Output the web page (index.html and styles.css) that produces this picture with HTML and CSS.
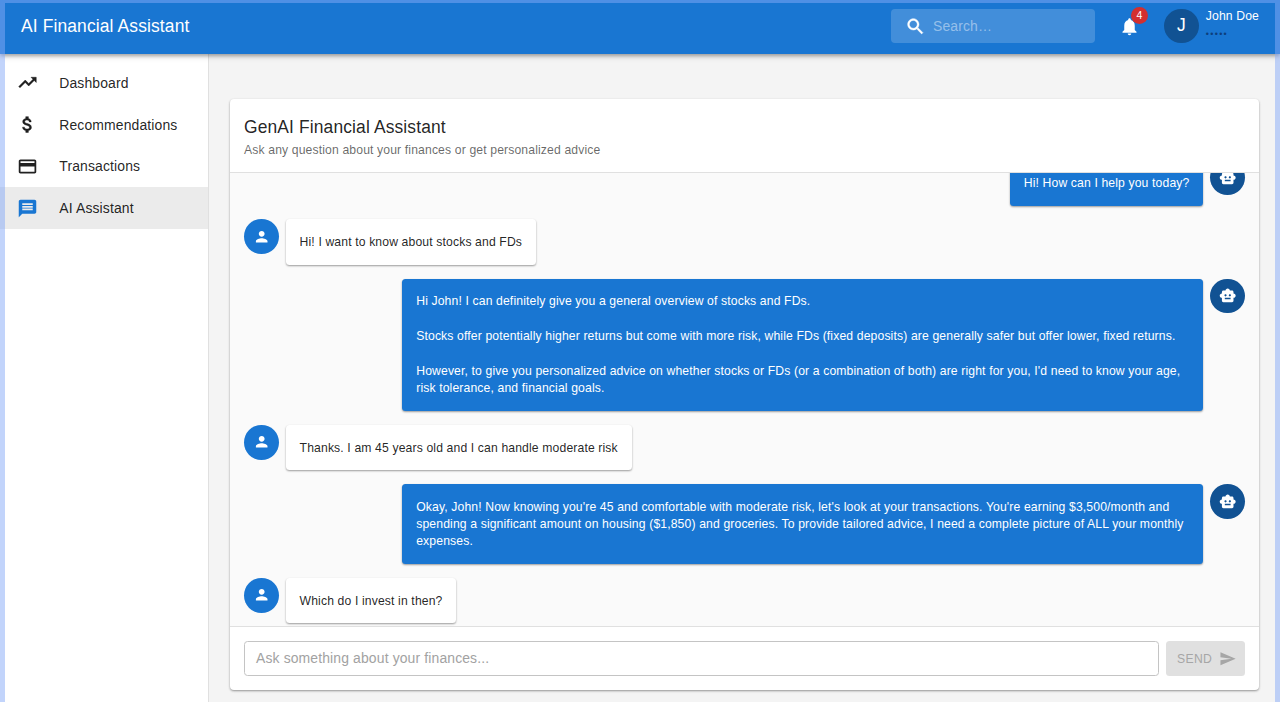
FILE: index.html
```html
<!DOCTYPE html>
<html lang="en">
<head>
<meta charset="utf-8">
<title>AI Financial Assistant</title>
<link rel="stylesheet" href="styles.css">
</head>
<body>
<svg class="defs" width="0" height="0">
  <symbol id="person" viewBox="0 0 24 24"><path d="M12 12c2.21 0 4-1.79 4-4s-1.79-4-4-4-4 1.79-4 4 1.79 4 4 4m0 2c-2.67 0-8 1.34-8 4v2h16v-2c0-2.66-5.33-4-8-4"/></symbol>
  <symbol id="bot" viewBox="0 0 24 24"><path d="M20 9V7c0-1.1-.9-2-2-2h-3c0-1.66-1.34-3-3-3S9 3.34 9 5H6c-1.1 0-2 .9-2 2v2c-1.66 0-3 1.34-3 3s1.34 3 3 3v4c0 1.1.9 2 2 2h12c1.1 0 2-.9 2-2v-4c1.66 0 3-1.34 3-3s-1.34-3-3-3M7.500 11.500c0-.83.67-1.500 1.500-1.500s1.500.67 1.500 1.500S9.830 13 9 13s-1.500-.67-1.500-1.500M16 17H8v-2h8zm-1-4c-.83 0-1.500-.67-1.500-1.500S14.170 10 15 10s1.500.67 1.500 1.500S15.830 13 15 13"/></symbol>
</svg>
<header class="appbar">
  <h1 class="brand">AI Financial Assistant</h1>
  <div class="search">
    <svg class="icon" viewBox="0 0 24 24"><path d="M15.500 14h-.79l-.28-.27C15.410 12.590 16 11.110 16 9.500 16 5.910 13.090 3 9.500 3S3 5.910 3 9.500 5.910 16 9.500 16c1.610 0 3.090-.59 4.230-1.570l.27.28v.79l5 4.990L20.490 19zm-6 0C7.010 14 5 11.990 5 9.500S7.010 5 9.500 5 14 7.010 14 9.500 11.990 14 9.500 14"/></svg>
    <span>Search…</span>
  </div>
  <div class="bell">
    <svg class="icon" viewBox="0 0 24 24"><path d="M12 22c1.100 0 2-.9 2-2h-4c0 1.100.89 2 2 2m6-6v-5c0-3.070-1.640-5.640-4.500-6.320V4c0-.83-.67-1.500-1.500-1.500s-1.500.67-1.500 1.500v.68C7.630 5.360 6 7.920 6 11v5l-2 2v1h16v-1z"/></svg>
    <span class="badge">4</span>
  </div>
  <div class="avatar dark initial">J</div>
  <div class="user"><span>John Doe</span><span class="dots">•••••</span></div>
</header>
<div class="shell">
  <nav class="sidebar">
    <a class="item"><svg class="icon bold" viewBox="0 0 24 24"><path d="m16 6 2.290 2.290-4.880 4.880-4-4L2 16.590 3.410 18l6-6 4 4 6.300-6.290L22 12V6z"/></svg>Dashboard</a>
    <a class="item"><svg class="icon bold" viewBox="0 0 24 24"><path d="M11.800 10.900c-2.270-.59-3-1.200-3-2.150 0-1.090 1.010-1.850 2.700-1.850 1.780 0 2.440.85 2.500 2.100h2.210c-.07-1.720-1.120-3.300-3.210-3.810V3h-3v2.160c-1.940.42-3.500 1.680-3.500 3.610 0 2.310 1.910 3.460 4.700 4.130 2.500.6 3 1.480 3 2.410 0 .69-.49 1.790-2.700 1.790-2.060 0-2.870-.92-2.980-2.100h-2.200c.12 2.190 1.760 3.420 3.680 3.830V21h3v-2.150c1.950-.37 3.500-1.500 3.500-3.550 0-2.840-2.430-3.810-4.700-4.400"/></svg>Recommendations</a>
    <a class="item"><svg class="icon" viewBox="0 0 24 24"><path d="M20 4H4c-1.110 0-1.990.89-1.990 2L2 18c0 1.110.89 2 2 2h16c1.110 0 2-.89 2-2V6c0-1.110-.89-2-2-2m0 14H4v-6h16zm0-10H4V6h16z"/></svg>Transactions</a>
    <a class="item selected"><svg class="icon" viewBox="0 0 24 24"><path d="M20 2H4c-1.100 0-1.990.9-1.990 2L2 22l4-4h14c1.100 0 2-.9 2-2V4c0-1.100-.9-2-2-2m-2 12H6v-2h12zm0-3H6V9h12zm0-3H6V6h12z"/></svg>AI Assistant</a>
  </nav>
  <main class="content">
    <section class="card">
      <div class="card-head">
        <h2>GenAI Financial Assistant</h2>
        <p>Ask any question about your finances or get personalized advice</p>
      </div>
      <div class="messages">
        <div class="row reply"><div class="bubble">Hi! How can I help you today?</div><div class="avatar dark"><svg><use href="#bot"/></svg></div></div>
        <div class="row"><div class="avatar"><svg><use href="#person"/></svg></div><div class="bubble">Hi! I want to know about stocks and FDs</div></div>
        <div class="row reply"><div class="bubble">Hi John! I can definitely give you a general overview of stocks and FDs.<br><br>Stocks offer potentially higher returns but come with more risk, while FDs (fixed deposits) are generally safer but offer lower, fixed returns.<br><br>However, to give you personalized advice on whether stocks or FDs (or a combination of both) are right for you, I'd need to know your age,<br>risk tolerance, and financial goals.</div><div class="avatar dark"><svg><use href="#bot"/></svg></div></div>
        <div class="row"><div class="avatar"><svg><use href="#person"/></svg></div><div class="bubble">Thanks. I am 45 years old and I can handle moderate risk</div></div>
        <div class="row reply"><div class="bubble">Okay, John! Now knowing you're 45 and comfortable with moderate risk, let's look at your transactions. You're earning $3,500/month and<br>spending a significant amount on housing ($1,850) and groceries. To provide tailored advice, I need a complete picture of ALL your monthly<br>expenses.</div><div class="avatar dark"><svg><use href="#bot"/></svg></div></div>
        <div class="row"><div class="avatar"><svg><use href="#person"/></svg></div><div class="bubble">Which do I invest in then?</div></div>
      </div>
      <div class="composer">
        <div class="field">Ask something about your finances...</div>
        <div class="send">SEND<svg viewBox="0 0 24 24"><path d="M2.010 21 23 12 2.010 3 2 10l15 2-15 2z"/></svg></div>
      </div>
    </section>
  </main>
</div>
<div class="glow"></div>
</body>
</html>
```
FILE: styles.css
```css
* { box-sizing: border-box; }
body {
  margin: 0;
  height: 702px;
  overflow: hidden;
  display: flex;
  flex-direction: column;
  font-family: "Liberation Sans", Arial, sans-serif;
  color: rgba(0, 0, 0, .87);
  background: #f4f4f4;
}
h1, h2, p { margin: 0; font-weight: 400; }
.defs { position: absolute; }
.icon { width: 21px; height: 21px; fill: currentColor; flex: none; }
.bold { stroke: currentColor; stroke-width: .5; }

.appbar {
  height: 54px;
  flex: none;
  display: flex;
  align-items: center;
  padding: 0 21px 2px;
  background: #1976d2;
  color: #fff;
  position: relative;
  z-index: 1;
  box-shadow: 0 2px 3px rgba(0, 0, 0, .25), 0 3px 6px rgba(0, 0, 0, .14);
}
.brand { font-size: 17.43px; letter-spacing: .13px; flex: 1; }
.search {
  width: 204px;
  height: 34px;
  margin-right: 24px;
  padding-left: 14px;
  display: flex;
  align-items: center;
  gap: 7px;
  border-radius: 4px;
  background: rgba(255, 255, 255, .18);
  font-size: 13.94px;
  letter-spacing: .13px;
}
.search .icon { stroke: currentColor; stroke-width: .5; }
.search span { color: rgba(255, 255, 255, .46); }
.bell { position: relative; display: flex; margin-right: 24px; }
.badge {
  position: absolute;
  left: 12px;
  top: -9px;
  width: 17px;
  height: 17px;
  border-radius: 50%;
  background: #d32f2f;
  font-size: 10.5px;
  line-height: 17px;
  text-align: center;
}
.avatar {
  width: 34.8px;
  height: 34.8px;
  flex: none;
  border-radius: 50%;
  background: #1976d2;
  display: flex;
  align-items: center;
  justify-content: center;
  color: #fff;
}
.avatar svg { width: 17.4px; height: 17.4px; fill: currentColor; }
.dark { background: #115293; }
.initial { font-size: 17.43px; }
.user {
  display: flex;
  flex-direction: column;
  align-self: flex-start;
  padding: 9px 0 0 7px;
  font-size: 12.2px;
  line-height: 15px;
  letter-spacing: .13px;
}
.dots { font-size: 9px; line-height: 20px; letter-spacing: 1.3px; color: #0d3f7c; }

.shell { flex: 1; display: flex; min-height: 0; }
.sidebar {
  width: 209px;
  flex: none;
  padding-top: 8px;
  background: #fff;
  border-right: 1px solid #e0e0e0;
}
.item {
  height: 41.8px;
  display: flex;
  align-items: center;
  gap: 21px;
  padding-left: 17.3px;
  font-size: 13.94px;
  letter-spacing: .13px;
}
.selected { background: #ebebeb; }
.selected .icon { color: #1976d2; }

.content { flex: 1; padding: 45px 21px 12px; display: flex; }
.card {
  flex: 1;
  display: flex;
  flex-direction: column;
  min-width: 0;
  background: #fff;
  border-radius: 4px;
  box-shadow: 0 1px 2px rgba(0, 0, 0, .3), 0 1px 3px rgba(0, 0, 0, .12);
  overflow: hidden;
}
.card-head {
  height: 74px;
  flex: none;
  padding: 14px 14px 0;
  border-bottom: 1px solid #e0e0e0;
}
.card-head h2 { font-size: 17.43px; line-height: 28px; letter-spacing: .13px; }
.card-head p { font-size: 12.2px; line-height: 19.4px; letter-spacing: .13px; color: rgba(0, 0, 0, .6); }
.messages {
  flex: 1;
  min-height: 0;
  overflow: hidden;
  display: flex;
  flex-direction: column;
  justify-content: flex-end;
  gap: 13.9px;
  padding: 0 14px 3.1px;
  background: #fafafa;
}
.row { display: flex; gap: 6.9px; align-items: flex-start; }
.reply { justify-content: flex-end; }
.bubble {
  padding: 14.8px 13.9px 13px;
  border-radius: 3.5px;
  background: #fff;
  font-size: 12.2px;
  line-height: 17.4px;
  letter-spacing: .13px;
  white-space: nowrap;
  box-shadow: 0 1px 2px rgba(0, 0, 0, .3), 0 1px 2px rgba(0, 0, 0, .1);
}
.reply .bubble { background: #1976d2; color: #fff; max-width: 801px; }
.reply .bubble:has(br) { width: 801px; }
.composer {
  height: 64px;
  flex: none;
  display: flex;
  gap: 7px;
  padding: 14px;
  border-top: 1px solid #e0e0e0;
}
.field {
  flex: 1;
  height: 35px;
  padding-left: 11px;
  border: 1px solid #c4c4c4;
  border-radius: 3.5px;
  font-size: 13.94px;
  line-height: 33px;
  letter-spacing: .13px;
  color: #a2a2a2;
}
.send {
  width: 79px;
  height: 35px;
  display: flex;
  align-items: center;
  padding-left: 11px;
  gap: 7px;
  border-radius: 3.5px;
  background: #e0e0e0;
  color: #a6a6a6;
  font-size: 12.2px;
  letter-spacing: .35px;
}
.send svg { width: 17.4px; height: 17.4px; fill: currentColor; }
.glow {
  position: fixed;
  inset: 0;
  z-index: 2;
  pointer-events: none;
  border: solid rgba(133, 169, 247, .5);
  border-width: 3px 5px 0;
}
```
